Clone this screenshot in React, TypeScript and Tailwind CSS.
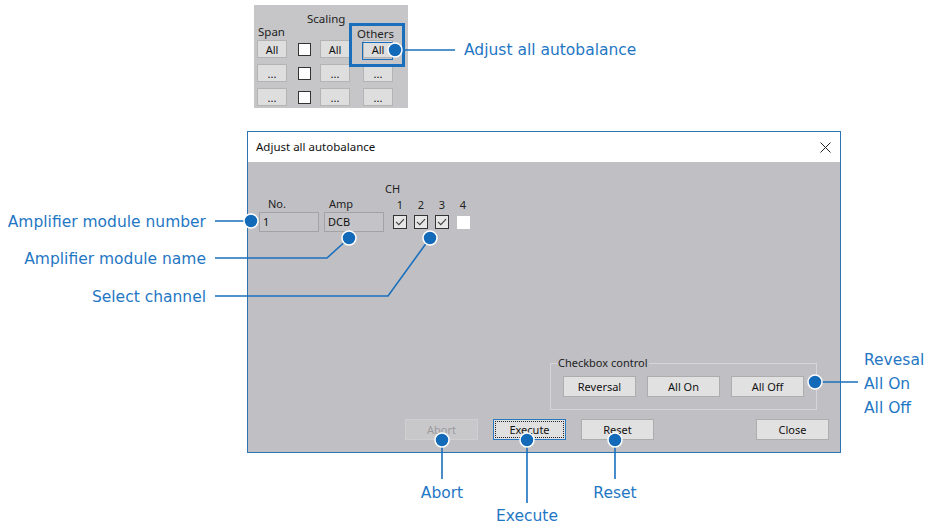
import React from "react";

const BLUE = "#1a6fbd";

function WinBtn({
  label,
  w = "w-[73px]",
  disabled = false,
  focused = false,
}: {
  label: string;
  w?: string;
  disabled?: boolean;
  focused?: boolean;
}) {
  if (focused) {
    return (
      <div className={`${w} h-[21px] border border-[#2b78c2] bg-[#e1e1e1] p-[1px]`}>
        <div className="flex h-full w-full items-center justify-center border border-dotted border-[#222] text-[11px] leading-none text-[#111]">
          {label}
        </div>
      </div>
    );
  }
  return (
    <div
      className={`${w} flex h-[21px] items-center justify-center border text-[11px] leading-none ${
        disabled
          ? "border-[#cfcfd2] bg-[#c8c8cb] text-[#9b9b9e]"
          : "border-[#adadad] bg-[#e1e1e1] text-[#111]"
      }`}
    >
      {label}
    </div>
  );
}

function CheckBox({ checked }: { checked: boolean }) {
  if (!checked) return <div className="h-[13px] w-[13px] bg-white" />;
  return (
    <div className="flex h-[14px] w-[14px] items-center justify-center border border-[#333] bg-[#e6e6e6]">
      <svg width="10" height="8" viewBox="0 0 10 8">
        <path d="M1 3.8 L3.8 6.6 L9 1.2" fill="none" stroke="#444" strokeWidth="1.2" />
      </svg>
    </div>
  );
}

function SnipBtn({ label }: { label: string }) {
  return (
    <div className="flex h-[18px] w-[30px] items-center justify-center border border-[#b4b4b4] bg-[#dedede] text-[11px] leading-none text-[#111]">
      {label}
    </div>
  );
}

function SnipCheck() {
  return <div className="h-[13px] w-[13px] border border-[#333] bg-white" />;
}

export default function App() {
  const callout = "text-[15.5px] leading-none text-[#1f77c4] whitespace-nowrap";
  return (
    <div
      className="relative h-[529px] w-[930px] overflow-hidden bg-white"
      style={{ fontFamily: "'DejaVu Sans', Verdana, sans-serif" }}
    >
      {/* Top snippet */}
      <div
        className="absolute left-[254px] top-[5px] flex h-[103px] w-[154px] flex-col bg-[#c6c6c8] pl-[3px] pt-[9px]"
        style={{ fontFamily: "'Noto Sans', 'Open Sans', sans-serif" }}
      >
        <div className="flex h-[26px]">
          <div className="flex w-[30px] items-end text-[11.5px] leading-none text-[#222]">
            <span className="mb-[3px] ml-[1px]">Span</span>
          </div>
          <div className="ml-[20px] flex w-[50px] items-start text-[11.5px] leading-none text-[#222]">
            <span className="mt-[-1px]">Scaling</span>
          </div>
          <div className="flex w-[40px] items-end text-[11.5px] leading-none text-[#222]">
            <span className="mb-[1px]">Others</span>
          </div>
        </div>
        <div className="flex flex-col gap-[6px]">
          {["All", "...", "..."].map((l, i) => (
            <div key={i} className="flex items-center">
              <SnipBtn label={l} />
              <div className="ml-[11px]">
                <SnipCheck />
              </div>
              <div className="ml-[9px]">
                <SnipBtn label={l} />
              </div>
              <div className="ml-[13px]">
                <SnipBtn label={l} />
              </div>
            </div>
          ))}
        </div>
      </div>
      {/* highlight box over snippet */}
      <div className="absolute left-[349px] top-[23px] h-[44px] w-[56px] border-[3px] border-[#1a6fbd]" />
      <div className="absolute left-[362px] top-[42px] h-[18px] w-[31px] border border-[#1a6fbd]" />

      {/* Dialog */}
      <div
        className="absolute left-[247px] top-[131px] flex h-[322px] w-[594px] flex-col border border-[#2b73b3] bg-white"
        style={{ fontFamily: "'Noto Sans', 'Open Sans', sans-serif" }}
      >
        <div className="flex h-[30px] items-center justify-between pl-[8px] pr-[9px]">
          <span className="text-[11.5px] text-[#111]">Adjust all autobalance</span>
          <svg width="11" height="11" viewBox="0 0 11 11">
            <path d="M0.5 0.5 L10.5 10.5 M10.5 0.5 L0.5 10.5" stroke="#222" strokeWidth="1" />
          </svg>
        </div>
        <div className="flex flex-1 flex-col bg-[#c0c0c4] pb-[12px] pl-[11px] pr-[11px] pt-[20px]">
          <div className="flex items-end">
            <div className="flex w-[60px] flex-col">
              <span className="mb-[2px] pl-[9px] text-[11px] leading-[13px] text-[#222]">No.</span>
              <div className="flex h-[20px] items-center border border-[#a3a3a6] bg-[#c4c4c8] pl-[3px] text-[11px] text-[#111]">
                1
              </div>
            </div>
            <div className="ml-[5px] flex w-[60px] flex-col">
              <span className="mb-[2px] pl-[5px] text-[11px] leading-[13px] text-[#222]">Amp</span>
              <div className="flex h-[20px] items-center border border-[#a3a3a6] bg-[#c4c4c8] pl-[3px] text-[11px] text-[#111]">
                DCB
              </div>
            </div>
            <div className="ml-[9px] flex flex-col">
              <span className="ml-[-8px] mb-[3px] text-[11px] leading-[13px] text-[#222]">CH</span>
              <div className="flex gap-[7px]">
                {[1, 2, 3, 4].map((n) => (
                  <div key={n} className="flex w-[14px] flex-col items-center">
                    <span className="mb-[1px] text-[11px] leading-[13px] text-[#222]">{n}</span>
                    <div className="flex h-[20px] items-center">
                      <CheckBox checked={n !== 4} />
                    </div>
                  </div>
                ))}
              </div>
            </div>
          </div>
          <div className="flex-1" />
          <div className="relative mr-[12px] self-end border border-[#d6d6da] px-[12px] pb-[12px] pt-[12px]">
            <span className="absolute left-[6px] top-[-8px] bg-[#c0c0c4] px-[1px] text-[11px] leading-[14px] text-[#222]">
              Checkbox control
            </span>
            <div className="flex gap-[11px]">
              <WinBtn label="Reversal" />
              <WinBtn label="All On" />
              <WinBtn label="All Off" />
            </div>
          </div>
          <div className="mt-[9px] flex pl-[146px]">
            <WinBtn label="Abort" disabled />
            <div className="ml-[15px]">
              <WinBtn label="Execute" focused />
            </div>
            <div className="ml-[15px]">
              <WinBtn label="Reset" />
            </div>
            <div className="flex-1" />
            <WinBtn label="Close" />
          </div>
        </div>
      </div>

      {/* callout lines */}
      <svg className="pointer-events-none absolute left-0 top-0" width="930" height="529">
        <g fill="none" stroke={BLUE} strokeWidth="1.6">
          <path d="M395 50 H455" />
          <path d="M215 221 H251" />
          <path d="M215 258 H327 L349 238" />
          <path d="M215 296 H388 L430 238" />
          <path d="M815 382 H858" />
          <path d="M442 440 V479" />
          <path d="M527 440 V503" />
          <path d="M615 440 V479" />
        </g>
        <g fill="#136ab9" stroke="#ffffff" strokeWidth="1.5">
          <circle cx="395" cy="50" r="7" />
          <circle cx="251" cy="221" r="7" />
          <circle cx="349" cy="238" r="7" />
          <circle cx="430" cy="238" r="7" />
          <circle cx="815" cy="382" r="7" />
          <circle cx="442" cy="440" r="7" />
          <circle cx="527" cy="440" r="7" />
          <circle cx="615" cy="440" r="7" />
        </g>
      </svg>

      {/* callout texts */}
      <span className={`absolute left-[464px] top-[43px] ${callout}`}>Adjust all autobalance</span>
      <span className={`absolute right-[724px] top-[215px] ${callout}`}>Amplifier module number</span>
      <span className={`absolute right-[724px] top-[252px] ${callout}`}>Amplifier module name</span>
      <span className={`absolute right-[724px] top-[290px] ${callout}`}>Select channel</span>
      <div className={`absolute left-[864px] top-[353px] flex flex-col gap-[8.5px] ${callout}`}>
        <span>Revesal</span>
        <span>All On</span>
        <span>All Off</span>
      </div>
      <span className={`absolute left-[442px] top-[486px] -translate-x-1/2 ${callout}`}>Abort</span>
      <span className={`absolute left-[527px] top-[509px] -translate-x-1/2 ${callout}`}>Execute</span>
      <span className={`absolute left-[615px] top-[486px] -translate-x-1/2 ${callout}`}>Reset</span>
    </div>
  );
}
